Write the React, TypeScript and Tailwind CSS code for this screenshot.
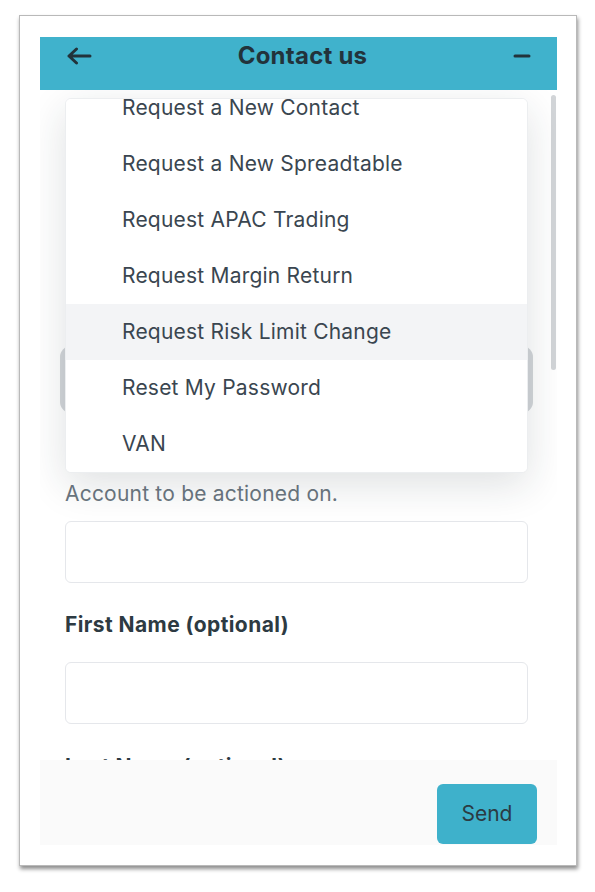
import React from 'react';

const requestTypes = [
  'Request a New Contact',
  'Request a New Spreadtable',
  'Request APAC Trading',
  'Request Margin Return',
  'Request Risk Limit Change',
  'Reset My Password',
  'VAN',
];

const BackIcon = () => (
  <svg width="25" height="18" viewBox="0 0 25 18" fill="none" stroke="currentColor" strokeWidth="3" strokeLinecap="round" strokeLinejoin="round">
    <path d="M9.5 2 L2 9 L9.5 16 M2 9 H23" />
  </svg>
);

const MinimizeIcon = () => (
  <svg width="18" height="6" viewBox="0 0 18 6" fill="none" stroke="currentColor" strokeWidth="3" strokeLinecap="round">
    <path d="M2 3 H16" />
  </svg>
);

const TextInput: React.FC<{ className?: string }> = ({ className = '' }) => (
  <div className={`h-[62px] w-full rounded-md border border-[#e5e7eb] bg-white ${className}`} />
);

const Label: React.FC<{ children: React.ReactNode; className?: string }> = ({ children, className = '' }) => (
  <div className={`text-[21px] leading-[28px] font-bold tracking-[0.02em] text-[#2d3a42] ${className}`}>{children}</div>
);

const RequestMenu: React.FC<{ active: string }> = ({ active }) => (
  <div className="absolute left-[25px] top-[8px] w-[463px] h-[375px] overflow-hidden rounded-md border border-[#eceef0] bg-white shadow-[0_12px_40px_rgba(30,40,50,0.14)]">
    <ul className="-mt-[19px]">
      {requestTypes.map(item => (
        <li
          key={item}
          className={`h-[56px] flex items-center pl-[56px] text-[21px] tracking-[0.01em] text-[#3a4650] ${
            item === active ? 'bg-[#f3f4f6]' : 'bg-white'
          }`}
        >
          {item}
        </li>
      ))}
    </ul>
  </div>
);

const App: React.FC = () => {
  return (
    <div className="w-[595px] h-[892px] bg-white font-['Inter',sans-serif] pt-[15px] pl-[19px]">
      <div className="w-[558px] h-[851px] bg-white border border-[#b9b9b9] shadow-[1px_3px_4px_rgba(0,0,0,0.45)] pt-[21px] pl-[20px]">
        <div className="w-[517px] h-[808px] flex flex-col bg-white">
          {/* header */}
          <div className="h-[53px] flex items-center justify-between bg-[#40b2cc] pl-[27px] pr-[26px] pb-[15px] text-[#22333b] flex-shrink-0">
            <BackIcon />
            <h1 className="text-[24px] font-bold tracking-[0.01em]">Contact us</h1>
            <MinimizeIcon />
          </div>

          {/* body */}
          <div className="relative flex-1 overflow-hidden">
            <div className="pl-[25px] pr-[29px] pt-[72px]">
              <Label>Email</Label>
              <TextInput className="mt-[23px]" />
              <Label className="mt-[25px]">Request Type</Label>
              <div className="mt-[23px] h-[57px] w-full rounded-md border border-[#d1d5db] bg-white ring-[5px] ring-[#d3d6d9]" />
              <Label className="mt-[28px]">Account</Label>
              <p className="mt-[16px] text-[21px] leading-[28px] tracking-[0.01em] text-[#6b7680]">Account to be actioned on.</p>
              <TextInput className="mt-[13px]" />
              <Label className="mt-[28px]">First Name (optional)</Label>
              <TextInput className="mt-[23px]" />
              <Label className="mt-[29px]">Last Name (optional)</Label>
              <TextInput className="mt-[23px]" />
            </div>

            <div className="absolute right-[1px] top-[5px] w-[5px] h-[275px] rounded-full bg-[#d2d5d8]" />

            <RequestMenu active="Request Risk Limit Change" />
          </div>

          {/* footer */}
          <div className="h-[85px] flex-shrink-0 flex justify-end items-start bg-[#fafafa] pt-[24px] pr-[20px]">
            <button className="w-[100px] h-[60px] rounded-md bg-[#3eb1cb] text-[21px] text-[#2b3b43]">Send</button>
          </div>
        </div>
      </div>
    </div>
  );
};

export default App;
